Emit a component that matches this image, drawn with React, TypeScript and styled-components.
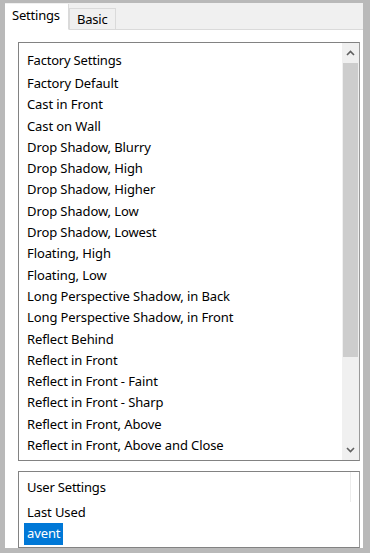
import React from 'react';
import styled, { createGlobalStyle } from 'styled-components';

const GlobalStyle = createGlobalStyle`
  html, body {
    margin: 0;
    padding: 0;
    background: #b9b9b9;
  }
  body {
    font-family: "Noto Sans", "Open Sans", sans-serif;
    font-size: 13px;
    color: #000;
  }
`;

const Frame = styled.div`
  width: 370px;
  height: 553px;
  box-sizing: border-box;
  padding: 3px 7px 5px 5px;
  background: #b9b9b9;
  display: flex;
  flex-direction: column;
  overflow: hidden;
`;

const TabStrip = styled.div`
  display: flex;
  align-items: flex-end;
  height: 26px;
  background: #f0f0f0;
  border-bottom: 1px solid #dadada;
  flex-shrink: 0;
`;

const Tab = styled.div<{ active?: boolean }>`
  box-sizing: border-box;
  height: ${(p) => (p.active ? '26px' : '22px')};
  margin-bottom: -1px;
  padding: ${(p) => (p.active ? '3px 8px 0 7px' : '2px 8px 0 7px')};
  background: ${(p) => (p.active ? '#ffffff' : '#f0f0f0')};
  border: 1px solid #dadada;
  border-bottom: ${(p) => (p.active ? '1px solid #ffffff' : '1px solid #dadada')};
  border-top: ${(p) => (p.active ? 'none' : '1px solid #dadada')};
  border-left: ${(p) => (p.active ? 'none' : '1px solid #dadada')};
  font-size: 13px;
  line-height: 17px;
  letter-spacing: -0.2px;
  color: #000;
`;

const Panel = styled.div`
  flex: 1;
  background: #ffffff;
  padding: 12px 3px 0 13px;
  display: flex;
  flex-direction: column;
  gap: 10px;
  min-height: 0;
`;

const ListBox = styled.div<{ grow?: boolean }>`
  box-sizing: border-box;
  border: 1px solid #828282;
  border-right-color: #9a9a9a;
  background: #fff;
  display: flex;
  height: ${(p) => (p.grow ? '419px' : 'auto')};
  flex: ${(p) => (p.grow ? '0 0 auto' : '1')};
  min-height: 0;
  overflow: hidden;
`;

const ListBody = styled.div<{ compact?: boolean }>`
  flex: 1;
  padding: ${(p) => (p.compact ? '5px 0 0 8px' : '7px 0 0 8px')};
  overflow: hidden;
`;

const Header = styled.div<{ gap: number }>`
  height: 21px;
  line-height: 21px;
  margin-bottom: ${(p) => p.gap}px;
  letter-spacing: -0.2px;
`;

const Item = styled.div<{ selected?: boolean }>`
  display: table;
  height: 21.3px;
  line-height: 21.3px;
  white-space: nowrap;
  letter-spacing: -0.1px;
  padding: 0 3px;
  margin-left: -3px;
  background: ${(p) => (p.selected ? '#0078d7' : 'transparent')};
  color: ${(p) => (p.selected ? '#ffffff' : '#000')};
`;

const ScrollBar = styled.div`
  width: 17px;
  background: #f0f0f0;
  display: flex;
  flex-direction: column;
  flex-shrink: 0;
`;

const ArrowButton = styled.div`
  height: 20px;
  display: flex;
  align-items: center;
  justify-content: center;
  flex-shrink: 0;
`;

const Track = styled.div`
  flex: 1;
  display: flex;
  flex-direction: column;
`;

const Thumb = styled.div`
  height: 294px;
  background: #cdcdcd;
  margin: 0 1px;
`;

const GhostBar = styled.div`
  width: 17px;
  flex-shrink: 0;
  display: flex;
  justify-content: center;
`;

const GhostLine = styled.div`
  width: 1px;
  height: 30px;
  background: #ececec;
`;

const Chevron = ({ up }: { up?: boolean }) => (
  <svg width="9" height="6" viewBox="0 0 9 6">
    <path
      d={up ? 'M1 5 L4.5 1.5 L8 5' : 'M1 1 L4.5 4.5 L8 1'}
      fill="none"
      stroke="#606060"
      strokeWidth="1.6"
    />
  </svg>
);

const factoryItems = [
  'Factory Default',
  'Cast in Front',
  'Cast on Wall',
  'Drop Shadow, Blurry',
  'Drop Shadow, High',
  'Drop Shadow, Higher',
  'Drop Shadow, Low',
  'Drop Shadow, Lowest',
  'Floating, High',
  'Floating, Low',
  'Long Perspective Shadow, in Back',
  'Long Perspective Shadow, in Front',
  'Reflect Behind',
  'Reflect in Front',
  'Reflect in Front - Faint',
  'Reflect in Front - Sharp',
  'Reflect in Front, Above',
  'Reflect in Front, Above and Close',
];

export default function App() {
  return (
    <>
      <GlobalStyle />
      <Frame>
        <TabStrip>
          <Tab active>Settings</Tab>
          <Tab>Basic</Tab>
        </TabStrip>
        <Panel>
          <ListBox grow>
            <ListBody>
              <Header gap={2}>Factory Settings</Header>
              {factoryItems.map((name) => (
                <Item key={name}>{name}</Item>
              ))}
            </ListBody>
            <ScrollBar>
              <ArrowButton>
                <Chevron up />
              </ArrowButton>
              <Track>
                <Thumb />
              </Track>
              <ArrowButton>
                <Chevron />
              </ArrowButton>
            </ScrollBar>
          </ListBox>
          <ListBox>
            <ListBody compact>
              <Header gap={4}>User Settings</Header>
              <Item>Last Used</Item>
              <Item selected>avent</Item>
            </ListBody>
            <GhostBar>
              <GhostLine />
            </GhostBar>
          </ListBox>
        </Panel>
      </Frame>
    </>
  );
}
